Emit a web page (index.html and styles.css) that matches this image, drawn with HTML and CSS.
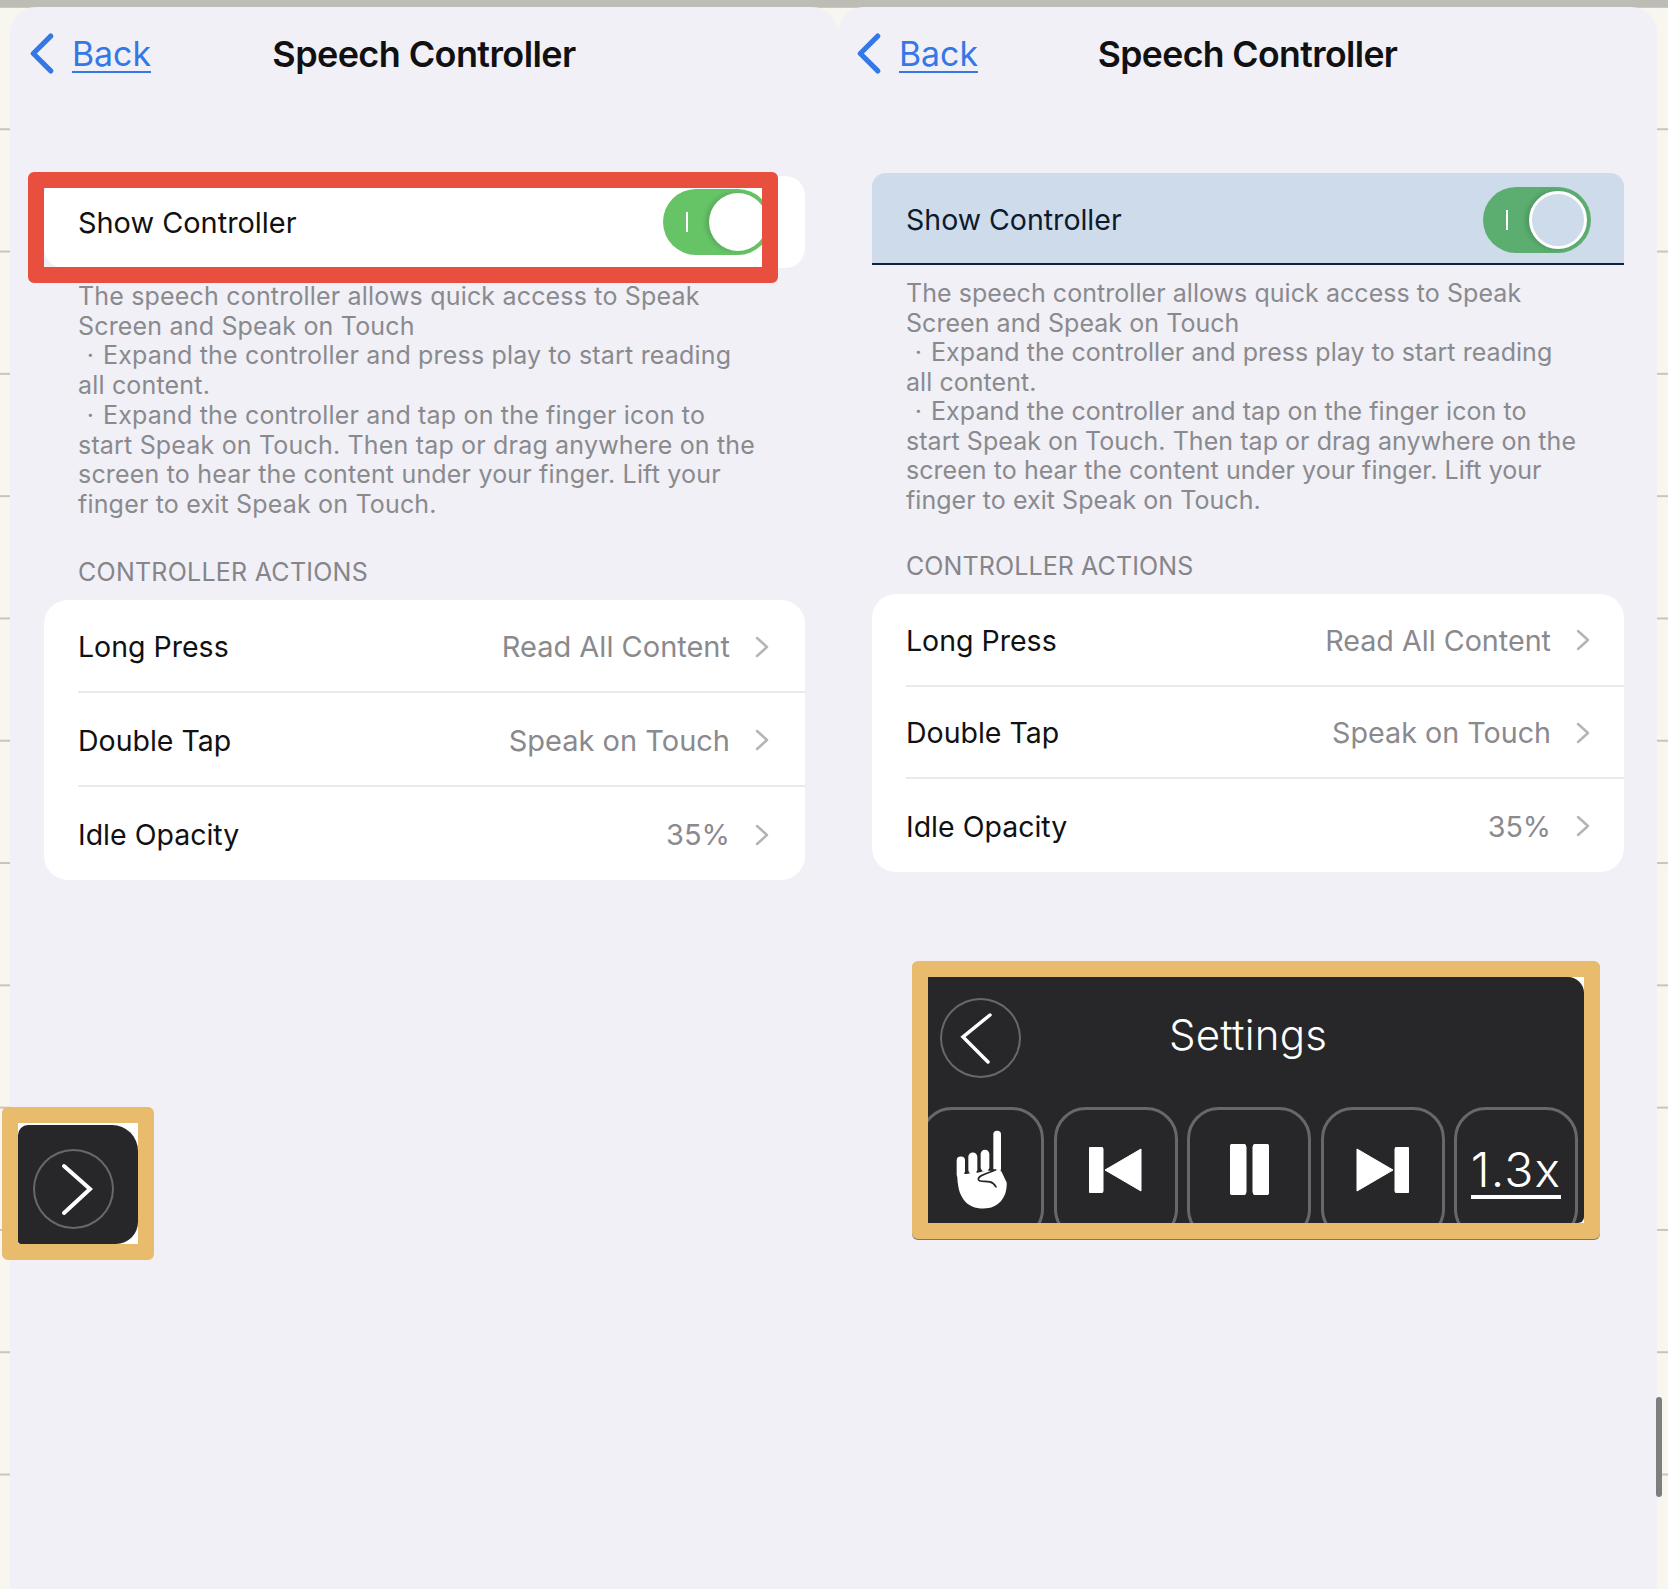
FILE: index.html
```html
<!DOCTYPE html>
<html lang="en">
<head>
    <meta charset="UTF-8">
    <meta name="viewport" content="width=device-width, initial-scale=1.0">
    <title>Speech Controller</title>
    <link rel="stylesheet" href="styles.css">
</head>
<body>
    <div class="topbar"></div>
    <div class="screens">
        <section class="panel panel-left">
            <header class="nav">
                <a class="back">
                    <svg class="back-icon" viewBox="0 0 24 40"><path d="M21 3 L4 20 L21 37"/></svg>
                    <span>Back</span>
                </a>
                <h1>Speech Controller</h1>
            </header>
            <div class="toggle-row">
                <span>Show Controller</span>
                <span class="switch"><i class="switch-mark"></i><i class="switch-knob"></i></span>
                <div class="mark-red"></div>
            </div>
            <p class="desc">The speech controller allows quick access to Speak<br>Screen and Speak on Touch<br><span class="dot">&middot;</span>Expand the controller and press play to start reading<br>all content.<br><span class="dot">&middot;</span>Expand the controller and tap on the finger icon to<br>start Speak on Touch. Then tap or drag anywhere on the<br>screen to hear the content under your finger. Lift your<br>finger to exit Speak on Touch.</p>
            <h2>CONTROLLER ACTIONS</h2>
            <div class="group">
                <div class="row"><span>Long Press</span><span class="value">Read All Content</span><svg class="chev" viewBox="0 0 14 22"><path d="M2 2 L12 11 L2 20"/></svg></div>
                <div class="row"><span>Double Tap</span><span class="value">Speak on Touch</span><svg class="chev" viewBox="0 0 14 22"><path d="M2 2 L12 11 L2 20"/></svg></div>
                <div class="row"><span>Idle Opacity</span><span class="value">35%</span><svg class="chev" viewBox="0 0 14 22"><path d="M2 2 L12 11 L2 20"/></svg></div>
            </div>
        </section>

        <section class="panel panel-right">
            <header class="nav">
                <a class="back">
                    <svg class="back-icon" viewBox="0 0 24 40"><path d="M21 3 L4 20 L21 37"/></svg>
                    <span>Back</span>
                </a>
                <h1>Speech Controller</h1>
            </header>
            <div class="toggle-row focused">
                <span>Show Controller</span>
                <span class="switch"><i class="switch-mark"></i><i class="switch-knob"></i></span>
            </div>
            <p class="desc">The speech controller allows quick access to Speak<br>Screen and Speak on Touch<br><span class="dot">&middot;</span>Expand the controller and press play to start reading<br>all content.<br><span class="dot">&middot;</span>Expand the controller and tap on the finger icon to<br>start Speak on Touch. Then tap or drag anywhere on the<br>screen to hear the content under your finger. Lift your<br>finger to exit Speak on Touch.</p>
            <h2>CONTROLLER ACTIONS</h2>
            <div class="group">
                <div class="row"><span>Long Press</span><span class="value">Read All Content</span><svg class="chev" viewBox="0 0 14 22"><path d="M2 2 L12 11 L2 20"/></svg></div>
                <div class="row"><span>Double Tap</span><span class="value">Speak on Touch</span><svg class="chev" viewBox="0 0 14 22"><path d="M2 2 L12 11 L2 20"/></svg></div>
                <div class="row"><span>Idle Opacity</span><span class="value">35%</span><svg class="chev" viewBox="0 0 14 22"><path d="M2 2 L12 11 L2 20"/></svg></div>
            </div>

            <div class="controller">
                <div class="controller-inner">
                    <div class="controller-head">
                        <span class="round-btn">
                            <svg viewBox="0 0 77 76"><path d="M48 15 L21 37 L46 62"/></svg>
                        </span>
                        <span class="controller-title">Settings</span>
                    </div>
                    <div class="controls">
                        <div class="ctl">
                            <svg class="hand" viewBox="75 90 165 245">
                                <rect x="190" y="95" width="23" height="125" rx="11"/>
                                <rect x="152" y="152" width="26" height="65" rx="13"/>
                                <rect x="115" y="160" width="27" height="65" rx="13"/>
                                <rect x="80" y="172" width="25" height="65" rx="12"/>
                                <path d="M82 228 L190 212 L214 216 L230 250 C232 295 205 328 160 328 C110 328 82 295 82 228 Z"/>
                                <path class="hand-line" d="M105 222 L115 220 M142 218 L152 216 M178 212 L190 212 M197 212 C175 222 145 228 145 240 C145 250 165 245 180 248 C190 250 195 258 198 263"/>
                            </svg>
                        </div>
                        <div class="ctl">
                            <svg class="skip" viewBox="0 0 53 46"><rect width="14" height="46" rx="2"/><path d="M16 23 L52 2 L52 44 Z"/></svg>
                        </div>
                        <div class="ctl">
                            <svg class="pause" viewBox="0 0 39 51"><rect width="16" height="51" rx="3"/><rect x="23" width="16" height="51" rx="3"/></svg>
                        </div>
                        <div class="ctl">
                            <svg class="skip" viewBox="0 0 53 46"><path d="M1 2 L37 23 L1 44 Z"/><rect x="39" width="14" height="46" rx="2"/></svg>
                        </div>
                        <div class="ctl"><span class="speed">1.3x</span></div>
                    </div>
                </div>
            </div>
            <div class="scrollbar"></div>
        </section>
    </div>

    <div class="mini">
        <div class="mini-inner">
            <span class="round-btn">
                <svg viewBox="0 0 77 76"><path d="M29 15 L55 38 L29 62"/></svg>
            </span>
        </div>
    </div>
</body>
</html>
```

FILE: styles.css
```css
* {
    box-sizing: border-box;
}
body {
    margin: 0;
    width: 1668px;
    height: 1589px;
    overflow: hidden;
    position: relative;
    font-family: Inter, "Liberation Sans", sans-serif;
    color: #111;
    background: #f8f6ee linear-gradient(transparent 5.7px, #c6c6bf 5.7px, #c6c6bf 8px, transparent 8px);
    background-size: 100% 122.3px;
}
.topbar {
    height: 7px;
    background: #bdbcb5;
}
.screens {
    display: flex;
    padding-left: 10px;
}
.panel {
    height: 1582px;
    background: #f0f0f6;
    border-radius: 26px 26px 0 0;
    position: relative;
}
.panel-left {
    width: 828px;
    padding: 0 33px 0 34px;
}
.panel-right {
    width: 819px;
    padding: 0 33px 0 34px;
}

/* nav */
.nav {
    height: 94px;
    margin: 0 -33px 0 -34px;
    position: relative;
    display: flex;
    align-items: center;
    justify-content: center;
}
h1 {
    margin: 0;
    font-size: 36px;
    font-weight: 600;
    letter-spacing: -0.6px;
}
.panel-right h1 {
    font-size: 35.6px;
}
.back {
    position: absolute;
    left: 19px;
    top: 26px;
    display: flex;
    align-items: center;
    gap: 18px;
    color: #3478e6;
    font-size: 33.8px;
    text-decoration: underline;
    text-decoration-thickness: 2px;
    text-underline-offset: 5px;
}
.panel-right .back {
    left: 18px;
}
.back-icon {
    width: 25px;
    height: 41px;
    fill: none;
    stroke: #3478e6;
    stroke-width: 5;
    stroke-linecap: round;
    stroke-linejoin: round;
}

/* show controller row */
.toggle-row {
    position: relative;
    height: 92px;
    margin-top: 75px;
    padding: 0 34px;
    display: flex;
    align-items: center;
    justify-content: space-between;
    background: #fff;
    border-radius: 20px;
    font-size: 28.9px;
}
.toggle-row.focused {
    margin-top: 72px;
    padding: 3px 33px 0 34px;
    background: #cedbeb;
    border-bottom: 2px solid #0e2240;
    border-radius: 14px 14px 0 0;
    color: #0d1a2c;
    font-size: 28.5px;
}
.mark-red {
    position: absolute;
    left: -16px;
    top: -4px;
    width: 750px;
    height: 111px;
    border: 16px solid #e94f3e;
    border-radius: 6px;
}
.switch {
    position: relative;
    width: 108px;
    height: 66px;
    border-radius: 33px;
    background: #66c466;
}
.focused .switch {
    background: #5bae70;
}
.switch-knob {
    position: absolute;
    right: 4px;
    top: 4px;
    width: 58px;
    height: 58px;
    border-radius: 50%;
    background: #fff;
    box-shadow: -3px 0 5px rgba(0,0,0,0.15);
}
.focused .switch-knob {
    background: #cedbeb;
    border: 3px solid #fff;
}
.switch-mark {
    position: absolute;
    left: 23px;
    top: 23px;
    width: 2px;
    height: 20px;
    background: #fff;
}

/* text */
.desc {
    margin: 14px 0 37px;
    padding-left: 34px;
    font-size: 25px;
    line-height: 29.7px;
    letter-spacing: 0.18px;
    color: #8a8a8e;
    white-space: nowrap;
}
.panel-right .desc {
    margin-bottom: 36px;
    line-height: 29.5px;
    letter-spacing: 0.05px;
}
.dot {
    display: inline-block;
    width: 25px;
    text-align: center;
}
h2 {
    margin: 0 0 13px;
    padding-left: 34px;
    font-size: 25px;
    line-height: 30px;
    font-weight: 400;
    letter-spacing: 0.25px;
    color: #85858a;
}
.panel-right h2 {
    letter-spacing: 0.1px;
}

/* list */
.group {
    background: #fff;
    border-radius: 24px;
}
.row {
    height: 93.5px;
    margin-left: 34px;
    padding: 3px 36px 0 0;
    display: flex;
    align-items: center;
    font-size: 28.5px;
    border-bottom: 2px solid #e9e9ec;
}
.panel-right .row {
    height: 92.5px;
    padding: 2px 34px 0 0;
}
.row:last-child {
    border-bottom: none;
}
.value {
    margin-left: auto;
    margin-right: 25px;
    font-size: 29px;
    color: #8a8a8e;
}
.panel-right .value {
    font-size: 28.7px;
}
.chev {
    width: 14px;
    height: 22px;
    fill: none;
    stroke: #b4b4b9;
    stroke-width: 2.5;
    stroke-linecap: round;
    stroke-linejoin: round;
}

/* floating controller */
.controller {
    width: 688px;
    height: 278px;
    margin: 89px 0 0 40px;
    border: 16px solid #e9bb6d;
    border-radius: 6px;
    background: #fff;
    box-shadow: 0 1px 0 #7d7666;
}
.controller-inner {
    height: 100%;
    background: #272729;
    border-radius: 0 16px 6px 0;
    overflow: hidden;
}
.controller-head {
    height: 130px;
    padding: 21px 0 0 12px;
    display: flex;
    color: #fff;
}
.round-btn {
    display: block;
    flex: none;
    width: 81px;
    height: 80px;
    border: 2px solid #68686a;
    border-radius: 50%;
}
.round-btn svg {
    display: block;
    width: 77px;
    height: 76px;
    fill: none;
    stroke: #fff;
    stroke-width: 3.5;
    stroke-linecap: round;
}
.mini .round-btn svg {
    stroke-width: 4;
}
.controller-title {
    margin: 7px 0 0 148px;
    font-size: 42px;
    line-height: 60px;
    font-weight: 300;
    letter-spacing: 0.2px;
}
.controls {
    display: flex;
    gap: 9.5px;
    margin-left: -8px;
}
.ctl {
    flex: none;
    width: 124px;
    height: 134px;
    padding-bottom: 8px;
    display: flex;
    align-items: center;
    justify-content: center;
    border: 3px solid #68686a;
    border-radius: 32px;
}
.ctl svg {
    fill: #fff;
    stroke: #fff;
    stroke-width: 1;
    stroke-linejoin: round;
}
.ctl .hand {
    width: 55px;
    height: 82px;
    stroke: none;
}
.hand-line {
    fill: none;
    stroke: #272729;
    stroke-width: 5;
    stroke-linecap: round;
}
.skip {
    width: 53px;
    height: 46px;
}
.pause {
    width: 39px;
    height: 51px;
}
.speed {
    margin-top: 5px;
    color: #fff;
    font-size: 48px;
    font-weight: 300;
    line-height: 50px;
    letter-spacing: 1.2px;
    border-bottom: 4px solid #fff;
}

.scrollbar {
    position: absolute;
    right: -5px;
    top: 1390px;
    width: 6px;
    height: 100px;
    border-radius: 3px;
    background: #7e7e7e;
}

/* collapsed controller, bottom left */
.mini {
    position: absolute;
    left: 2px;
    top: 1107px;
    width: 152px;
    height: 153px;
    border: 16px solid #e9bb6d;
    border-radius: 6px;
    background: #fff;
}
.mini-inner {
    height: 119px;
    margin-top: 2px;
    padding: 24px 0 0 15px;
    background: #272729;
    border-radius: 10px 26px 22px 3px;
}
```
